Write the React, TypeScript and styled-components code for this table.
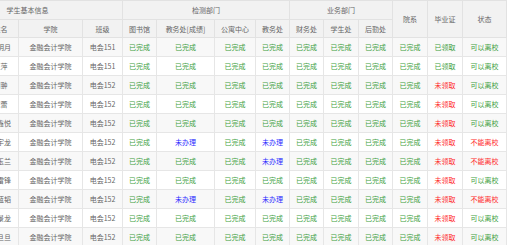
import React from 'react';
import styled, { createGlobalStyle } from 'styled-components';

const GlobalStyle = createGlobalStyle`
  html, body {
    margin: 0;
    padding: 0;
    background: #ffffff;
  }
  body {
    font-family: 'Noto Sans CJK SC', 'Noto Sans', sans-serif;
  }
`;

const Viewport = styled.div`
  width: 507px;
  height: 245px;
  overflow: hidden;
  background: #ffffff;
`;

const Table = styled.table`
  margin-left: -68px;
  width: 574px;
  table-layout: fixed;
  border-collapse: collapse;
  font-size: 7px;
  color: #666666;
`;

const Th = styled.th<{ $h?: number }>`
  height: ${({ $h }) => $h ?? 18}px;
  padding: 0;
  font-weight: 400;
  text-align: center;
  background: #f2f2f2;
  border: 1px solid #e2e2e2;
  white-space: nowrap;
`;

const Row = styled.tr<{ $even: boolean }>`
  background: ${({ $even }) => ($even ? '#ffffff' : '#f8f8f8')};
`;

const Td = styled.td<{ $tone?: 'ok' | 'todo' | 'bad' }>`
  height: 18px;
  padding: 0;
  text-align: center;
  border: 1px solid #e6e6e6;
  white-space: nowrap;
  color: ${({ $tone }) =>
    $tone === 'ok' ? '#3f9f3f' : $tone === 'todo' ? '#2b2bff' : $tone === 'bad' ? '#ff2b2b' : '#666666'};
`;

const widths = [50, 36, 64, 40, 34, 58, 41, 34, 34, 35, 34, 35, 35, 44];

type Student = {
  id: string;
  name: string;
  cls: string;
  todo: number[];
  cert: boolean;
};

const students: Student[] = [
  { id: '2012010101', name: '李明月', cls: '电会151', todo: [], cert: true },
  { id: '2012010102', name: '王萍', cls: '电会151', todo: [], cert: true },
  { id: '2012010201', name: '刘翀', cls: '电会152', todo: [], cert: false },
  { id: '2012010202', name: '陈蕾', cls: '电会152', todo: [], cert: false },
  { id: '2012010203', name: '张鑫悦', cls: '电会152', todo: [], cert: false },
  { id: '2012010204', name: '赵宇龙', cls: '电会152', todo: [1, 3], cert: false },
  { id: '2012010205', name: '孙玉兰', cls: '电会152', todo: [3], cert: false },
  { id: '2012010206', name: '周雷锋', cls: '电会152', todo: [], cert: false },
  { id: '2012010207', name: '吴蓝韬', cls: '电会152', todo: [1, 3], cert: false },
  { id: '2012010208', name: '郑景龙', cls: '电会152', todo: [], cert: false },
  { id: '2012010209', name: '钱旦旦', cls: '电会152', todo: [], cert: false },
];

const App = () => {
  return (
    <Viewport>
      <GlobalStyle />
      <Table>
        <colgroup>
          {widths.map((w, i) => (
            <col key={i} style={{ width: w }} />
          ))}
        </colgroup>
        <thead>
          <tr>
            <Th colSpan={4}>学生基本信息</Th>
            <Th colSpan={4}>检测部门</Th>
            <Th colSpan={3}>业务部门</Th>
            <Th rowSpan={2}>院系</Th>
            <Th rowSpan={2}>毕业证</Th>
            <Th rowSpan={2}>状态</Th>
          </tr>
          <tr>
            <Th $h={17}>学号</Th>
            <Th $h={17}>姓名</Th>
            <Th $h={17}>学院</Th>
            <Th $h={17}>班级</Th>
            <Th $h={17}>图书馆</Th>
            <Th $h={17}>教务处[成绩]</Th>
            <Th $h={17}>公寓中心</Th>
            <Th $h={17}>教务处</Th>
            <Th $h={17}>财务处</Th>
            <Th $h={17}>学生处</Th>
            <Th $h={17}>后勤处</Th>
          </tr>
        </thead>
        <tbody>
          {students.map((s, r) => {
            const blocked = s.todo.length > 0;
            return (
              <Row key={s.id} $even={r % 2 === 1}>
                <Td>{s.id}</Td>
                <Td>{s.name}</Td>
                <Td>金融会计学院</Td>
                <Td>{s.cls}</Td>
                {Array.from({ length: 8 }).map((_, c) =>
                  s.todo.includes(c) ? (
                    <Td key={c} $tone="todo">未办理</Td>
                  ) : (
                    <Td key={c} $tone="ok">已完成</Td>
                  )
                )}
                <Td $tone={s.cert ? 'ok' : 'bad'}>{s.cert ? '已领取' : '未领取'}</Td>
                <Td $tone={blocked ? 'bad' : 'ok'}>{blocked ? '不能离校' : '可以离校'}</Td>
              </Row>
            );
          })}
        </tbody>
      </Table>
    </Viewport>
  );
};

export default App;
